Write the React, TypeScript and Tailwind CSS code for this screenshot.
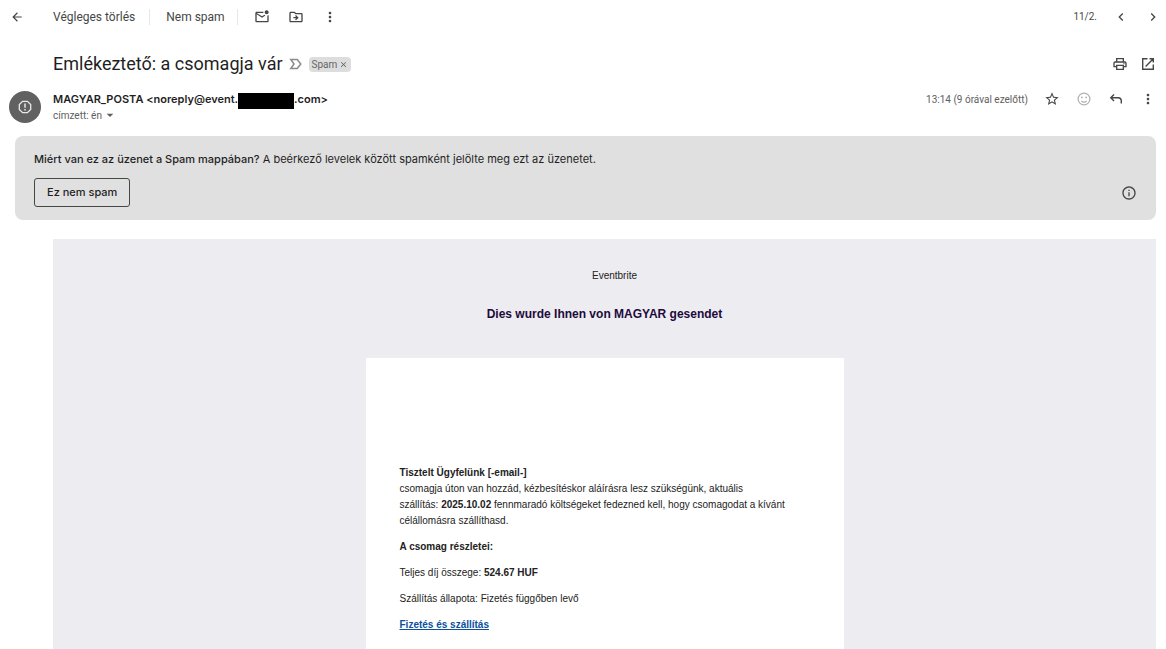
import type { ReactNode } from "react";
import {
  MdArrowBack,
  MdArrowDropDown,
  MdChevronLeft,
  MdChevronRight,
  MdClose,
  MdInfoOutline,
  MdMoreVert,
  MdOutlineDriveFileMove,
  MdOutlineMarkEmailUnread,
  MdOutlinePrint,
  MdStarBorder,
} from "react-icons/md";

interface IconButtonProps {
  label: string;
  className?: string;
  children: ReactNode;
}

const IconButton = ({ label, className = "text-[#444746]", children }: IconButtonProps) => (
  <button type="button" aria-label={label} className={`flex size-4 shrink-0 items-center justify-center ${className}`}>
    {children}
  </button>
);

const ImportanceIcon = () => (
  <svg width="14" height="12" viewBox="0 0 14 12" fill="none" stroke="currentColor" strokeWidth="1.5">
    <path d="M1.8 1.500h6.400L11.800 6l-3.600 4.500H1.800L5 6z" />
  </svg>
);

const SmileIcon = () => (
  <svg width="14" height="14" viewBox="0 0 14 14" fill="none" stroke="currentColor" strokeWidth="1.2">
    <circle cx="7" cy="7" r="5.9" />
    <path d="M4.400 8.800c.7.900 1.600 1.300 2.600 1.300s1.900-.4 2.600-1.300" />
    <circle cx="4.900" cy="5.400" r=".9" fill="currentColor" stroke="none" />
    <circle cx="9.100" cy="5.400" r=".9" fill="currentColor" stroke="none" />
  </svg>
);

const ReplyIcon = () => (
  <svg width="14" height="12" viewBox="0 0 14 12" fill="none" stroke="currentColor" strokeWidth="1.4">
    <path d="M5 1.500 1.800 4.700 5 7.900M1.800 4.700H9q3.300 0 3.300 3.300v2.500" />
  </svg>
);

// Square with an open corner and the arrow running from inside it
const OpenInNewIcon = () => (
  <svg width="14" height="14" viewBox="0 0 14 14" fill="none" stroke="currentColor" strokeWidth="1.4">
    <path d="M6.500 1.700H1.700v10.600h10.600V7.500M8.500 1.700h3.800v3.800M12.300 1.700 4.600 9.400" />
  </svg>
);

const SpamAvatar = () => (
  <div className="flex size-8 shrink-0 items-center justify-center rounded-full bg-[#616161] text-[#e8e8e8]">
    <svg width="14" height="14" viewBox="0 0 14 14" fill="none" stroke="currentColor" strokeWidth="1.3">
      <path d="M4.600 1.300h4.800l3.300 3.300v4.800l-3.300 3.300H4.600L1.300 9.400V4.600z" />
      <path d="M7 3.500v4.200M7 9v1.500" strokeWidth="1.500" />
    </svg>
  </div>
);

const Toolbar = () => (
  <div className="flex h-8 items-center pt-px pr-[5px] pl-[9px] text-[#444746]">
    <IconButton label="Vissza"><MdArrowBack size={14} /></IconButton>
    <button type="button" className="ml-7 text-xs">Végleges törlés</button>
    <div className="ml-3.5 h-4 w-px bg-[#e8e8e8]" />
    <button type="button" className="ml-4 text-xs">Nem spam</button>
    <div className="ml-3 h-4 w-px bg-[#e8e8e8]" />
    <div className="ml-4 flex gap-[18px]">
      <IconButton label="Megjelölés olvasatlanként"><MdOutlineMarkEmailUnread size={16} /></IconButton>
      <IconButton label="Áthelyezés"><MdOutlineDriveFileMove size={16} /></IconButton>
      <IconButton label="Továbbiak"><MdMoreVert size={16} /></IconButton>
    </div>
    <div className="ml-auto flex items-center gap-4">
      <span className="text-[10px]">11/2.</span>
      <IconButton label="Újabb"><MdChevronLeft size={18} /></IconButton>
      <IconButton label="Régebbi"><MdChevronRight size={18} /></IconButton>
    </div>
  </div>
);

const SubjectRow = () => (
  <div className="flex h-8 items-center">
    <h1 className="text-lg text-[#1f1f1f]">Emlékeztető: a csomagja vár</h1>
    <span className="ml-1.5 text-[#8a8a8a]"><ImportanceIcon /></span>
    <span className="ml-1.5 flex h-[15px] items-center gap-0.5 rounded-sm bg-[#ddd] px-[3px] text-[10px] text-[#666]">
      Spam
      <button type="button" aria-label="Címke eltávolítása"><MdClose size={9} /></button>
    </span>
    <div className="ml-auto flex gap-3">
      <IconButton label="Nyomtatás"><MdOutlinePrint size={16} /></IconButton>
      <IconButton label="Új ablakban"><OpenInNewIcon /></IconButton>
    </div>
  </div>
);

const SenderRow = () => (
  <div className="flex">
    <div>
      <div className="flex h-4 items-center font-[Inter,sans-serif] text-[11px] font-semibold text-[#1f1f1f]">
        MAGYAR_POSTA &lt;noreply@event.
        <span className="mt-1 h-4 w-14 bg-black" />
        .com&gt;
      </div>
      <button type="button" className="flex h-4 items-center text-[10px] text-[#5e5e5e]">
        címzett: én
        <MdArrowDropDown size={16} />
      </button>
    </div>
    <div className="ml-auto flex h-4 items-center gap-4">
      <span className="text-[10px] text-[#5e5e5e]">13:14 (9 órával ezelőtt)</span>
      <IconButton label="Csillagozás"><MdStarBorder size={16} /></IconButton>
      <IconButton label="Reakció" className="text-[#b0b0b0]"><SmileIcon /></IconButton>
      <IconButton label="Válasz"><ReplyIcon /></IconButton>
      <IconButton label="Továbbiak"><MdMoreVert size={16} /></IconButton>
    </div>
  </div>
);

const SpamNotice = () => (
  <section className="mt-[13px] mr-2.5 ml-[15px] rounded-lg bg-[#e0e0e0] px-[19px] pt-[15px] pb-[13px] font-[Inter,sans-serif] text-[11px] text-[#1f1f1f]">
    <p className="leading-4">
      <span className="font-medium">Miért van ez az üzenet a Spam mappában?</span>{" "}
      A beérkező levelek között spamként jelölte meg ezt az üzenetet.
    </p>
    <div className="mt-[11px] flex items-center justify-between">
      <button type="button" className="h-[29px] rounded-[3px] border border-[#444746] px-3 font-medium">
        Ez nem spam
      </button>
      <IconButton label="Információ"><MdInfoOutline size={16} /></IconButton>
    </div>
  </section>
);

const MailBody = () => (
  <article className="mt-[19px] mr-2.5 ml-[53px] bg-[#edecf1] pt-[29px] font-['Liberation_Sans',Arial,sans-serif] text-[10px] leading-4 text-[#222]">
    <p className="pl-5 text-center">Eventbrite</p>
    <h2 className="mt-[22px] text-center text-xs font-bold text-[#1e0a3c]">Dies wurde Ihnen von MAGYAR gesendet</h2>
    <div className="mx-auto mt-9 w-[478px] max-w-full space-y-2.5 bg-white px-[34px] pt-[107px] pb-4">
      <p>
        <b>Tisztelt Ügyfelünk [-email-]</b>
        <br />
        csomagja úton van hozzád, kézbesítéskor aláírásra lesz szükségünk, aktuális
        <br />
        szállítás: <b>2025.10.02</b> fennmaradó költségeket fedezned kell, hogy csomagodat a kívánt
        <br />
        célállomásra szállíthasd.
      </p>
      <p><b>A csomag részletei:</b></p>
      <p>Teljes díj összege: <b>524.67 HUF</b></p>
      <p>Szállítás állapota: Fizetés függőben levő</p>
      <p><a href="#" className="font-bold text-[#0b4f9e] underline">Fizetés és szállítás</a></p>
    </div>
  </article>
);

const App = () => (
  <main className="bg-white font-[Roboto,sans-serif]">
    <Toolbar />
    <header className="mt-4 flex pr-2.5 pl-[9px]">
      <div className="mt-[43px] w-11 shrink-0"><SpamAvatar /></div>
      <div className="min-w-0 flex-1">
        <SubjectRow />
        <div className="mt-[11px]"><SenderRow /></div>
      </div>
    </header>
    <SpamNotice />
    <MailBody />
  </main>
);

export default App;
